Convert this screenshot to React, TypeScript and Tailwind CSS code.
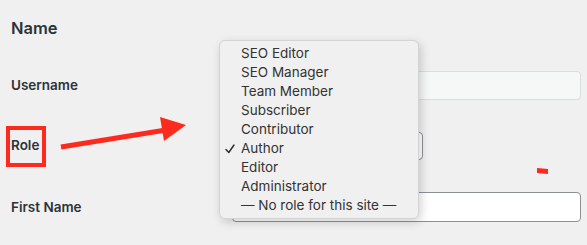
import React from "react";

const roles = [
  "SEO Editor",
  "SEO Manager",
  "Team Member",
  "Subscriber",
  "Contributor",
  "Author",
  "Editor",
  "Administrator",
  "— No role for this site —",
];

export default function App() {
  return (
    <div
      className="relative w-[587px] h-[245px] overflow-hidden bg-[#f0f0f1] text-[#1d2327]"
      style={{ fontFamily: "Inter, 'Liberation Sans', sans-serif" }}
    >
      <div className="flex flex-col pl-[11px] pt-[18px]">
        <h2 className="text-[16.5px] leading-[20px] font-semibold text-[#2c3338]">Name</h2>

        <div className="mt-[32px] flex h-[30px] items-center">
          <div className="w-[221px] text-[13.5px] font-semibold text-[#2c3338]">Username</div>
          <div className="h-[29px] w-[349px] rounded-[4px] border border-[#dcdcde] bg-[#f6f7f7]" />
        </div>

        <div className="mt-[31px] flex h-[29px] items-center">
          <div className="w-[221px] text-[13.5px] font-semibold text-[#2c3338]">Role</div>
          <div className="h-[28px] w-[191px] rounded-[4px] border border-[#8c8f94] bg-white" />
        </div>

        <div className="mt-[32px] flex h-[30px] items-center">
          <div className="w-[221px] text-[13.5px] font-semibold text-[#2c3338]">First Name</div>
          <div className="h-[30px] w-[349px] rounded-[4px] border border-[#8c8f94] bg-white" />
        </div>
      </div>

      {/* dropdown menu */}
      <div className="absolute left-[219px] top-[40px] w-[200px] h-[179px] rounded-[6px] border border-[#d4d4d4] bg-[#f0f0f0] pt-[3px] shadow-[2px_3px_10px_rgba(0,0,0,0.18)]">
        {roles.map((r) => (
          <div key={r} className="relative flex h-[19px] items-center pl-[21px] text-[13.5px] text-[#333333]">
            {r === "Author" && (
              <svg className="absolute left-[5px] top-[5px]" width="10" height="10" viewBox="0 0 10 10">
                <path d="M1 5.5 L3.8 8.5 L9 1" fill="none" stroke="#2b2b2b" strokeWidth="1.4" strokeLinecap="round" strokeLinejoin="round" />
              </svg>
            )}
            {r}
          </div>
        ))}
      </div>

      {/* red box annotation */}
      <div className="absolute left-[6px] top-[126px] h-[41px] w-[40px] border-[4px] border-[#fe2a1e]" />

      {/* arrow annotation */}
      <svg className="absolute left-0 top-0" width="587" height="245" viewBox="0 0 587 245">
        <line x1="61" y1="147" x2="166" y2="130" stroke="#fe2a1e" strokeWidth="5" />
        <polygon points="160,117 186,125 164,141" fill="#fe2a1e" />
        <polygon points="537,168 548,169 548,174 537,173" fill="#fe2a1e" />
      </svg>
    </div>
  );
}
